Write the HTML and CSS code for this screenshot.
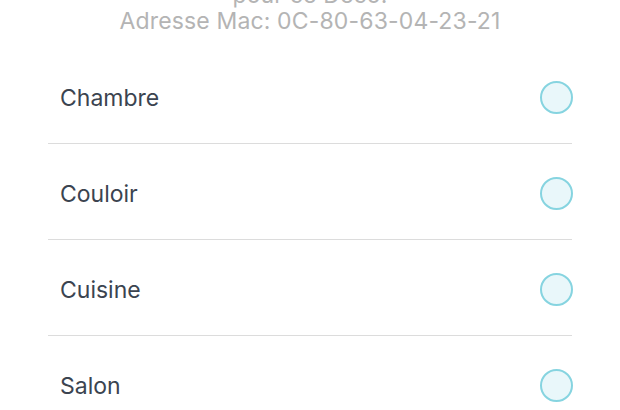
FILE: index.html
```html
<!DOCTYPE html>
<html lang="fr">
<head>
<meta charset="utf-8">
<link rel="stylesheet" href="styles.css">
</head>
<body>
<div class="page">
  <header class="info">
    <p class="line">pour ce Deco.</p>
    <p class="line">Adresse Mac: 0C-80-63-04-23-21</p>
  </header>
  <ul class="rooms">
    <li class="room"><span class="name">Chambre</span><span class="radio"></span></li>
    <li class="room"><span class="name">Couloir</span><span class="radio"></span></li>
    <li class="room"><span class="name">Cuisine</span><span class="radio"></span></li>
    <li class="room"><span class="name">Salon</span><span class="radio"></span></li>
  </ul>
</div>
</body>
</html>
```
FILE: styles.css
```css
html, body {
  margin: 0;
  padding: 0;
  background: #ffffff;
  overflow: hidden;
}
.page {
  width: 620px;
  height: 410px;
  overflow: hidden;
  font-family: Inter, "Liberation Sans", Arial, sans-serif;
}
.info {
  margin-top: -18px;
  text-align: center;
  color: #b4b4b4;
  font-size: 23px;
  line-height: 26px;
  letter-spacing: 0.15px;
}
.line {
  margin: 0;
}
.rooms {
  list-style: none;
  margin: 14px 48px 0 48px;
  padding: 0;
}
.room {
  height: 91px;
  padding-top: 4px;
  border-bottom: 1px solid #dcdcdc;
  display: flex;
  align-items: center;
  justify-content: space-between;
  padding-left: 12px;
}
.name {
  font-size: 23px;
  color: #3b4450;
}
.radio {
  width: 29px;
  height: 29px;
  border-radius: 50%;
  border: 2px solid #86d4e0;
  background: #e9f7fa;
  margin-right: -1px;
}
```
